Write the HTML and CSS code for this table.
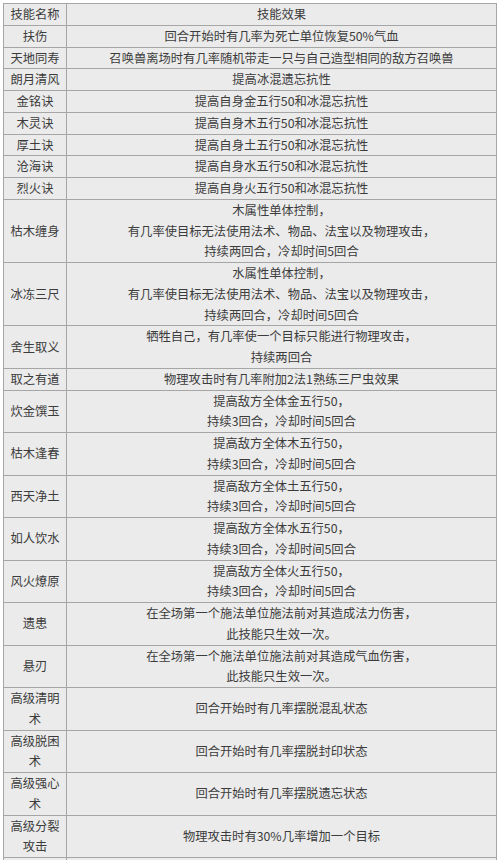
FILE: index.html
```html
<!DOCTYPE html>
<html lang="zh-CN">
<head>
<meta charset="utf-8">
<title>技能效果</title>
<link rel="stylesheet" href="styles.css">
</head>
<body>
<table class="skills">
  <colgroup><col class="c-name"><col class="c-effect"></colgroup>
  <tr><td>技能名称</td><td>技能效果</td></tr>
  <tr><td>扶伤</td><td>回合开始时有几率为死亡单位恢复50%气血</td></tr>
  <tr><td>天地同寿</td><td>召唤兽离场时有几率随机带走一只与自己造型相同的敌方召唤兽</td></tr>
  <tr><td>朗月清风</td><td>提高冰混遗忘抗性</td></tr>
  <tr><td>金铭诀</td><td>提高自身金五行50和冰混忘抗性</td></tr>
  <tr><td>木灵诀</td><td>提高自身木五行50和冰混忘抗性</td></tr>
  <tr><td>厚土诀</td><td>提高自身土五行50和冰混忘抗性</td></tr>
  <tr><td>沧海诀</td><td>提高自身水五行50和冰混忘抗性</td></tr>
  <tr><td>烈火诀</td><td>提高自身火五行50和冰混忘抗性</td></tr>
  <tr><td>枯木缠身</td><td>木属性单体控制，<br>有几率使目标无法使用法术、物品、法宝以及物理攻击，<br>持续两回合，冷却时间5回合</td></tr>
  <tr><td>冰冻三尺</td><td>水属性单体控制，<br>有几率使目标无法使用法术、物品、法宝以及物理攻击，<br>持续两回合，冷却时间5回合</td></tr>
  <tr><td>舍生取义</td><td>牺牲自己，有几率使一个目标只能进行物理攻击，<br>持续两回合</td></tr>
  <tr><td>取之有道</td><td>物理攻击时有几率附加2法1熟练三尸虫效果</td></tr>
  <tr><td>炊金馔玉</td><td>提高敌方全体金五行50，<br>持续3回合，冷却时间5回合</td></tr>
  <tr><td>枯木逢春</td><td>提高敌方全体木五行50，<br>持续3回合，冷却时间5回合</td></tr>
  <tr><td>西天净土</td><td>提高敌方全体土五行50，<br>持续3回合，冷却时间5回合</td></tr>
  <tr><td>如人饮水</td><td>提高敌方全体水五行50，<br>持续3回合，冷却时间5回合</td></tr>
  <tr><td>风火燎原</td><td>提高敌方全体火五行50，<br>持续3回合，冷却时间5回合</td></tr>
  <tr><td>遗患</td><td>在全场第一个施法单位施法前对其造成法力伤害，<br>此技能只生效一次。</td></tr>
  <tr><td>悬刃</td><td>在全场第一个施法单位施法前对其造成气血伤害，<br>此技能只生效一次。</td></tr>
  <tr><td>高级清明<br>术</td><td>回合开始时有几率摆脱混乱状态</td></tr>
  <tr><td>高级脱困<br>术</td><td>回合开始时有几率摆脱封印状态</td></tr>
  <tr><td>高级强心<br>术</td><td>回合开始时有几率摆脱遗忘状态</td></tr>
  <tr><td>高级分裂<br>攻击</td><td>物理攻击时有30%几率增加一个目标</td></tr>
  <tr><td>&nbsp;</td><td>&nbsp;</td></tr>
</table>
</body>
</html>
```

FILE: styles.css
```css
html, body {
  margin: 0;
  padding: 0;
  background: #ffffff;
}

body {
  overflow: hidden;
  height: 860px;
}

.skills {
  margin: 3px 0 0 3px;
  width: 494px;
  border-collapse: collapse;
  table-layout: fixed;
  background: #ebebeb;
  font-family: "Noto Sans CJK SC", "Noto Sans", sans-serif;
  font-size: 12.3px;
  line-height: 20.75px;
  color: #3c3c3c;
}

.c-name {
  width: 63px;
}

.skills td {
  border: 1px solid #a6a6a6;
  padding: 0;
  text-align: center;
  vertical-align: middle;
  white-space: nowrap;
}
```
